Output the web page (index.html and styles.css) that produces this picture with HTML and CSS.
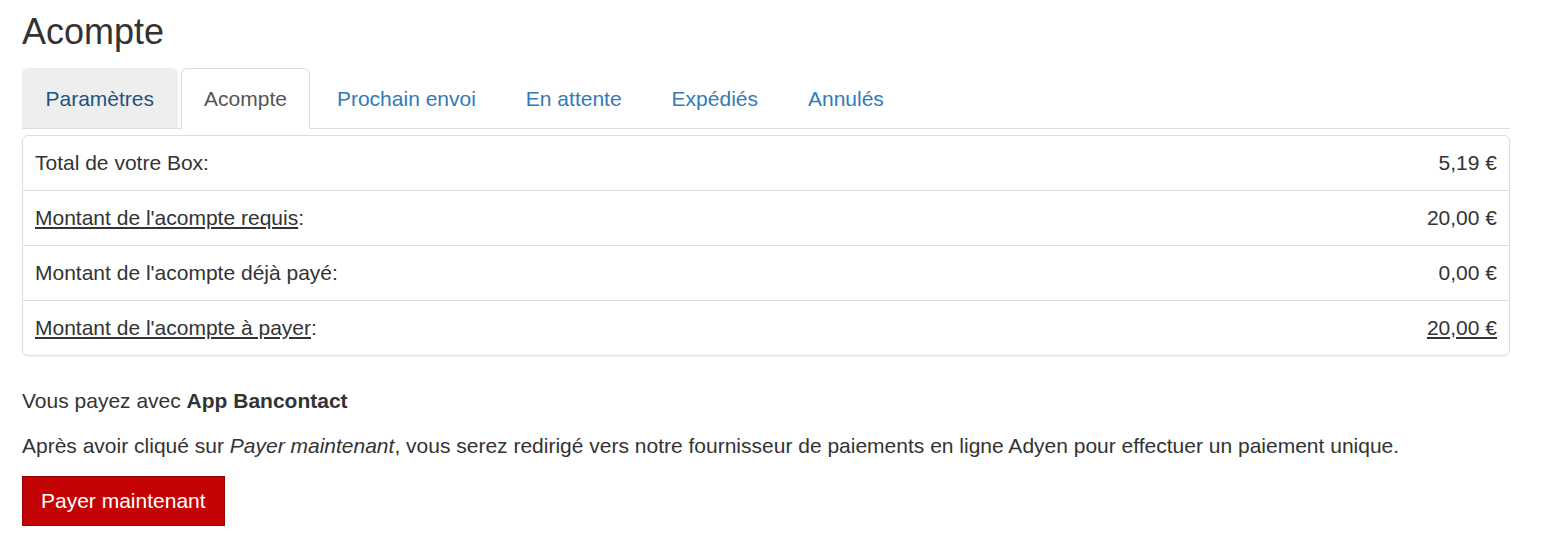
FILE: index.html
```html
<!DOCTYPE html>
<html lang="fr">
<head>
<meta charset="utf-8">
<title>Acompte</title>
<link rel="stylesheet" href="styles.css">
</head>
<body>
<div class="container">
  <h1 class="title">Acompte</h1>
  <ul class="tabs">
    <li class="tab tab-muted"><a>Paramètres</a></li>
    <li class="tab tab-active"><a>Acompte</a></li>
    <li class="tab"><a>Prochain envoi</a></li>
    <li class="tab"><a>En attente</a></li>
    <li class="tab"><a>Expédiés</a></li>
    <li class="tab"><a>Annulés</a></li>
  </ul>
  <div class="panel">
    <div class="row"><span><span>Total de votre Box</span>:</span><span>5,19 €</span></div>
    <div class="row"><span><span class="ul">Montant de l'acompte requis</span>:</span><span>20,00 €</span></div>
    <div class="row"><span><span>Montant de l'acompte déjà payé</span>:</span><span>0,00 €</span></div>
    <div class="row"><span><span class="ul">Montant de l'acompte à payer</span>:</span><span class="ul">20,00 €</span></div>
  </div>
  <p class="text">Vous payez avec <strong>App Bancontact</strong></p>
  <p class="text">Après avoir cliqué sur <em>Payer maintenant</em>, vous serez redirigé vers notre fournisseur de paiements en ligne Adyen pour effectuer un paiement unique.</p>
  <button class="btn">Payer maintenant</button>
</div>
</body>
</html>
```

FILE: styles.css
```css
* { box-sizing: border-box; }
html, body { margin: 0; padding: 0; background: #fff; }
body {
  font-family: "Liberation Sans", Arial, Helvetica, sans-serif;
  font-size: 21px;
  line-height: 30px;
  color: #333;
}
.container {
  width: 1488px;
  margin-left: 22px;
  padding-top: 12px;
}
.title {
  margin: 0 0 16px 0;
  font-size: 36px;
  font-weight: 400;
  line-height: 39.6px;
  color: #333;
}
.tabs {
  list-style: none;
  margin: 0;
  padding: 0;
  display: flex;
  border-bottom: 1px solid #ddd;
}
.tab {
  margin-right: 3px;
  margin-bottom: -1px;
}
.tab a {
  display: block;
  padding: 15px 22.5px 14px;
  border: 1px solid transparent;
  border-radius: 6px 6px 0 0;
  color: #337ab7;
  cursor: pointer;
}
.tab-muted a {
  background: #eee;
  border-color: #eee #eee #ddd;
  color: #23527c;
}
.tab-active a {
  background: #fff;
  border-color: #ddd #ddd transparent;
  color: #555;
}
.panel {
  margin-top: 6px;
  border: 1px solid #ddd;
  border-radius: 6px;
  box-shadow: 0 1px 1px rgba(0,0,0,0.05);
}
.row {
  display: flex;
  justify-content: space-between;
  padding: 12px;
  height: 55px;
  border-top: 1px solid #ddd;
}
.row:first-child { border-top: 0; height: 54px; }
.ul { text-decoration: underline; }
.text {
  margin: 30px 0 15px;
}
.text + .text { margin-top: 0; }
.btn {
  display: block;
  font-family: inherit;
  font-size: 21px;
  line-height: 30px;
  padding: 9px 18px;
  color: #fff;
  background: #c40404;
  border: 1px solid #9a0000;
  border-radius: 0;
  cursor: pointer;
}
```
